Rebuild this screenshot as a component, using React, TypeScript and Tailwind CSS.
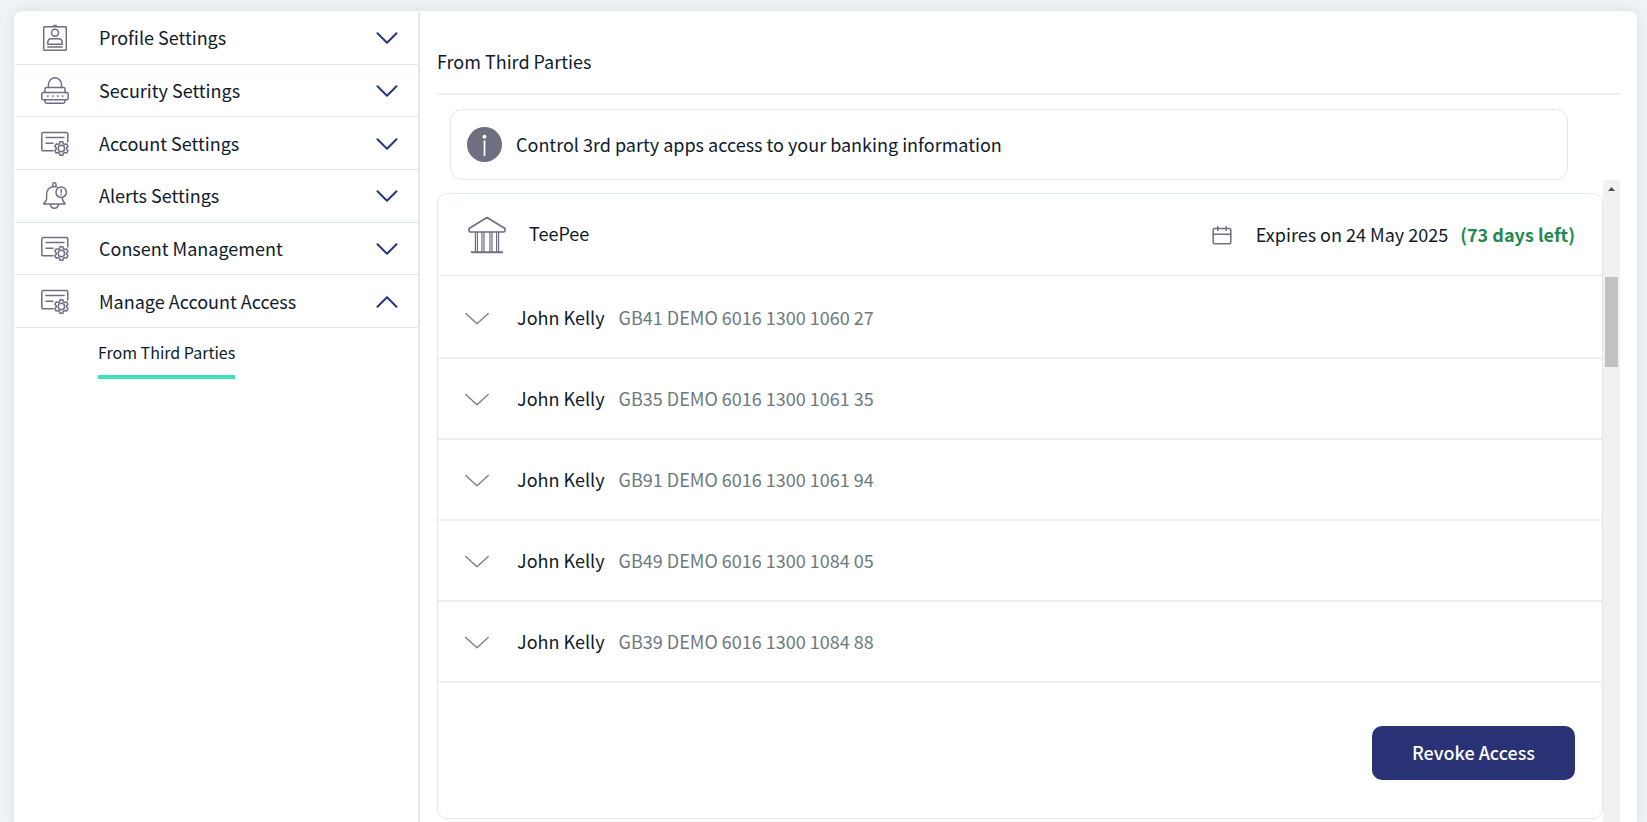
import React from "react";

type IconProps = { className?: string };

const iconBase = {
  fill: "none",
  stroke: "#6f6f84",
  strokeLinecap: "round" as const,
  strokeLinejoin: "round" as const,
};

function ProfileIcon() {
  return (
    <svg {...iconBase} viewBox="0 0 28 28" className="size-7" strokeWidth="1.5" aria-hidden="true">
      <rect x="2.7" y="2.7" width="22.6" height="23.6" rx="0.8" />
      <path d="M12.8 2.2v-.8h2.4v.8z" />
      <circle cx="14" cy="8.7" r="3.5" />
      <path d="M6.8 20.2v-1.7c0-2.2 1.6-3.7 3.8-3.7h6.8c2.2 0 3.8 1.5 3.8 3.7v1.7z" />
      <path d="M6.8 22.9h14.4" />
    </svg>
  );
}

function LockIcon() {
  return (
    <svg {...iconBase} viewBox="0 0 28 28" className="size-7" strokeWidth="1.5" aria-hidden="true">
      <path d="M7.4 10.6V8a6.6 7.2 0 0 1 13.2 0v2.6" />
      <path d="M4 15.4v-3.2c0-1 .6-1.6 1.6-1.6h16.8c1 0 1.6.6 1.6 1.6v3.2" />
      <rect x="0.8" y="15.4" width="26.4" height="7.4" rx="1.6" />
      <path d="M4 22.8v1.8c0 1 .6 1.7 1.6 1.7h16.8c1 0 1.6-.7 1.6-1.7v-1.8" />
      <path d="M6.7 19.1h.4M11.6 19.1h.4M16.6 19.1h.4M21.5 19.1h.4" strokeWidth="1.6" />
    </svg>
  );
}

function CardGearIcon() {
  return (
    <svg {...iconBase} viewBox="0 0 28 28" className="size-7" strokeWidth="1.5" aria-hidden="true">
      <path d="M12 20.8H2.4c-1 0-1.6-.6-1.6-1.6V4c0-1 .6-1.6 1.6-1.6h22.8c1 0 1.6.6 1.6 1.6v8" />
      <path d="M5 7.4h18M5 13.2h7" />
      <circle cx="20.4" cy="18.5" r="3.2" />
      <path d="M19 11.8h2.8l.5 1.9 1.4.8 1.9-.6 1.4 2.4-1.4 1.4v1.6l1.4 1.4-1.4 2.4-1.9-.6-1.4.8-.5 1.9H19l-.5-1.9-1.4-.8-1.9.6-1.4-2.4 1.4-1.4v-1.6l-1.4-1.4 1.4-2.4 1.9.6 1.4-.8z" />
    </svg>
  );
}

function BellIcon() {
  return (
    <svg {...iconBase} viewBox="0 0 28 28" className="size-7" strokeWidth="1.5" aria-hidden="true">
      <path d="M11.8 4.6V2.4a1.6 1.6 0 0 1 3.2 0v1.8" />
      <path d="M16 4.9c-1-.4-1.9-.5-2.8-.5-4.6.2-7.6 3.6-7.6 8v4.2c0 1.7-.6 2.6-1.6 3.5-.8.7-1.3 1.2-1.3 1.9h21.4c0-.8-.5-1.2-1.2-1.9-1-1-1.5-1.9-1.5-3.5v-.9" />
      <path d="M9.4 22.4c.4 2.4 1.9 3.9 4 3.9s3.6-1.5 4-3.9" />
      <circle cx="20.2" cy="10.2" r="5.2" />
      <path d="M20.2 7.4v3.4M20.2 12.7v.2" />
    </svg>
  );
}

function Chevron({ up = false }: { up?: boolean }) {
  return (
    <svg viewBox="0 0 22 12" className="h-3 w-[22px]" fill="none" stroke="#2b357e" strokeWidth="2" strokeLinecap="round" strokeLinejoin="round" aria-hidden="true">
      <path d={up ? "M1.5 10.8 11 1.3l9.5 9.5" : "M1.5 1.2 11 10.7l9.5-9.5"} />
    </svg>
  );
}

function ThinChevron() {
  return (
    <svg viewBox="0 0 24 14" className="h-[14px] w-6" fill="none" stroke="#7d7d90" strokeWidth="1.4" strokeLinecap="round" strokeLinejoin="round" aria-hidden="true">
      <path d="M.8 2.4 12 12.8 23.200 2.4" />
    </svg>
  );
}

function InfoIcon() {
  return (
    <svg viewBox="0 0 36 36" className="size-[35px]" aria-hidden="true">
      <circle cx="18" cy="18" r="18" fill="#6f6f82" />
      <circle cx="18" cy="10" r="2" fill="#fff" />
      <path d="M18 14.5v14.5" stroke="#fff" strokeWidth="1.8" strokeLinecap="round" />
    </svg>
  );
}

function BankIcon() {
  return (
    <svg {...iconBase} viewBox="0 0 38 38" className="size-[38px]" strokeWidth="1.7" aria-hidden="true">
      <path d="M1 12.4 19 1.5l18 10.9v2c0 1-.6 1.6-1.6 1.6H2.6C1.6 16 1 15.4 1 14.4z" />
      <path d="M3.7 36.2h30.6" strokeWidth="2" />
      <path d="M7.4 16v20M9.4 16v20M14 16v20M16 16v20M22 16v20M24 16v20M28.6 16v20M30.6 16v20" strokeWidth="1.2" />
    </svg>
  );
}

function CalendarIcon() {
  return (
    <svg {...iconBase} viewBox="0 0 20 20" className="size-5" strokeWidth="1.5" aria-hidden="true">
      <rect x="1.2" y="3.4" width="17.6" height="15.4" rx="1.4" />
      <path d="M1.2 9.2h17.6M5.8 1.6v4M14.2 1.6v4" />
    </svg>
  );
}

const sections: { label: string; Icon: React.ComponentType<IconProps>; open?: boolean }[] = [
  { label: "Profile Settings", Icon: ProfileIcon },
  { label: "Security Settings", Icon: LockIcon },
  { label: "Account Settings", Icon: CardGearIcon },
  { label: "Alerts Settings", Icon: BellIcon },
  { label: "Consent Management", Icon: CardGearIcon },
  { label: "Manage Account Access", Icon: CardGearIcon, open: true },
];

const accounts = [
  { name: "John Kelly", iban: "GB41 DEMO 6016 1300 1060 27" },
  { name: "John Kelly", iban: "GB35 DEMO 6016 1300 1061 35" },
  { name: "John Kelly", iban: "GB91 DEMO 6016 1300 1061 94" },
  { name: "John Kelly", iban: "GB49 DEMO 6016 1300 1084 05" },
  { name: "John Kelly", iban: "GB39 DEMO 6016 1300 1084 88" },
];

function Sidebar() {
  return (
    <nav aria-label="Settings" className="mt-px ml-px w-[405px] shrink-0 border-r-2 border-[#e0e7ef]">
      <ul className="grid h-[316px] grid-rows-6">
        {sections.map(({ label, Icon, open }) => (
          <li key={label} className="border-b border-[#dfe6ee]">
            <button type="button" aria-expanded={!!open} className="flex h-full w-full items-center pt-px pr-5 pl-[26px] text-left">
              <Icon />
              <span className="ml-[30px] flex-1 pb-0.5">{label}</span>
              <Chevron up={open} />
            </button>
          </li>
        ))}
      </ul>
      <a href="#third-parties" aria-current="page" className="mt-[10px] ml-[83px] inline-block border-b-4 border-[#3de3b4] pb-[9px] text-base leading-7">
        From Third Parties
      </a>
    </nav>
  );
}

function Scrollbar() {
  return (
    <div aria-hidden="true" className="flex w-[17px] shrink-0 flex-col items-center bg-[#f1f1f1]">
      <svg viewBox="0 0 17 17" className="size-[17px]">
        <path d="M5 11h7L8.5 7z" fill="#505050" />
      </svg>
      <div className="mt-20 h-[90px] w-[13px] bg-[#c1c1c1]" />
    </div>
  );
}

function ConsentCard() {
  return (
    <section className="rounded-[10px] border border-[#e1e7ef]">
      <header className="flex h-[82px] items-center border-b border-[#e9eef3] pr-[27px] pl-[30px]">
        <BankIcon />
        <h2 className="ml-[23px] flex-1 pb-1">TeePee</h2>
        <CalendarIcon />
        <span className="ml-6 pb-0.5">Expires on 24 May 2025</span>
        <span className="ml-3 pb-0.5 font-bold text-[#218a4c]">(73 days left)</span>
      </header>
      <ul className="pt-0.5">
        {accounts.map((account) => (
          <li key={account.iban} className="border-b-2 border-[#ebf0f5]">
            <button type="button" aria-expanded={false} className="flex h-[79px] w-full items-center pl-[27px] text-left">
              <ThinChevron />
              <span className="ml-7 pb-0.5">{account.name}</span>
              <span className="ml-[14px] pb-0.5 text-[#6d797d]">{account.iban}</span>
            </button>
          </li>
        ))}
      </ul>
      <footer className="flex justify-end px-[27px] pt-[43px] pb-[38px]">
        <button type="button" className="h-[54px] rounded-[10px] bg-[#293275] px-10 pb-0.5 font-medium text-white">
          Revoke Access
        </button>
      </footer>
    </section>
  );
}

export default function App() {
  return (
    <div className="flex h-screen overflow-hidden bg-[#eff3f6] pt-[11px] pr-[10px] pl-[14px] font-['Noto_Sans_CJK_SC','Noto_Sans',sans-serif] text-[18px] leading-6 text-[#0f1b2a]">
      <div className="flex min-w-0 flex-1 rounded-t-lg bg-white shadow-[0_0_12px_rgba(60,80,100,0.12)]">
        <Sidebar />
        <main id="third-parties" className="flex min-w-0 flex-1 flex-col px-[17px]">
          <h1 className="border-b-2 border-[#edf1f5] pt-[38px] pb-5">From Third Parties</h1>
          <div className="mt-[14px] mr-[52px] ml-[13px] flex h-[71px] shrink-0 items-center rounded-xl border border-[#e1e7f0] pl-4">
            <InfoIcon />
            <p className="ml-[14px] pb-0.5">Control 3rd party apps access to your banking information</p>
          </div>
          <div className="flex min-h-0 flex-1">
            <div className="min-w-0 flex-1 overflow-hidden pt-[13px]">
              <ConsentCard />
            </div>
            <Scrollbar />
          </div>
        </main>
      </div>
    </div>
  );
}
